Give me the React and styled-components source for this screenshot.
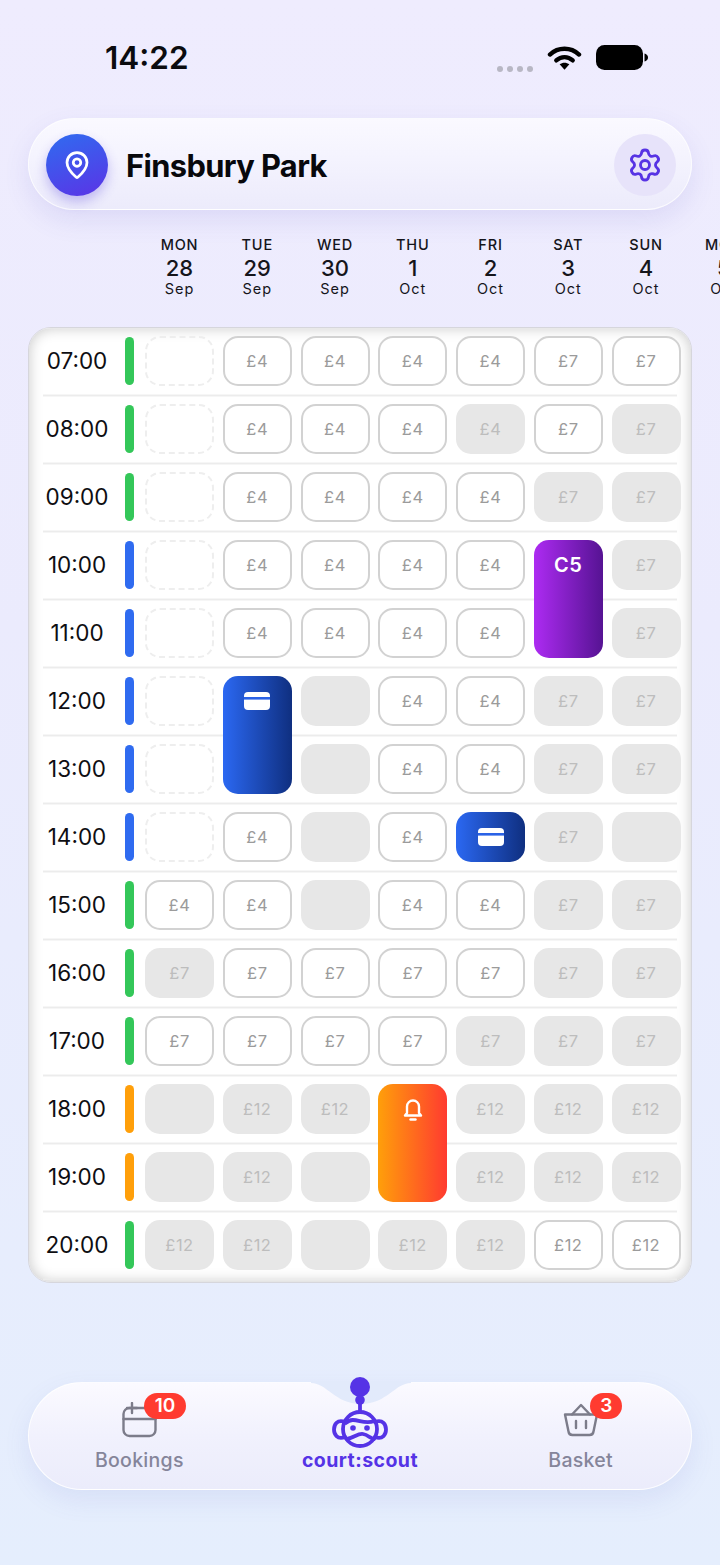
import React from "react";
import styled, { createGlobalStyle } from "styled-components";
import { MapPin, Settings } from "lucide-react";

const GlobalStyle = createGlobalStyle`
  html, body {
    margin: 0;
    padding: 0;
    width: 720px;
    height: 1565px;
    overflow: hidden;
    font-family: Inter, "Liberation Sans", sans-serif;
  }
`;

const days = [
  ["MON", "28", "Sep"],
  ["TUE", "29", "Sep"],
  ["WED", "30", "Sep"],
  ["THU", "1", "Oct"],
  ["FRI", "2", "Oct"],
  ["SAT", "3", "Oct"],
  ["SUN", "4", "Oct"],
  ["MON", "5", "Oct"],
];

// d = dashed, b = blank grey, number = free slot, g + number = taken slot
const rows = [
  ["07:00", "green", ["d", "4", "4", "4", "4", "7", "7"]],
  ["08:00", "green", ["d", "4", "4", "4", "g4", "7", "g7"]],
  ["09:00", "green", ["d", "4", "4", "4", "4", "g7", "g7"]],
  ["10:00", "blue", ["d", "4", "4", "4", "4", "court", "g7"]],
  ["11:00", "blue", ["d", "4", "4", "4", "4", "g7"]],
  ["12:00", "blue", ["d", "cardTall", "b", "4", "4", "g7", "g7"]],
  ["13:00", "blue", ["d", "b", "4", "4", "g7", "g7"]],
  ["14:00", "blue", ["d", "4", "b", "4", "card", "g7", "b"]],
  ["15:00", "green", ["4", "4", "b", "4", "4", "g7", "g7"]],
  ["16:00", "green", ["g7", "7", "7", "7", "7", "g7", "g7"]],
  ["17:00", "green", ["7", "7", "7", "7", "g7", "g7", "g7"]],
  ["18:00", "orange", ["b", "g12", "g12", "bell", "g12", "g12", "g12"]],
  ["19:00", "orange", ["b", "g12", "b", "g12", "g12", "g12"]],
  ["20:00", "green", ["g12", "g12", "b", "g12", "g12", "12", "12"]],
];

const barColours = { green: "#34c759", blue: "#2f6bf0", orange: "#ff9f0a" };

const Page = styled.div`
  width: 720px;
  height: 1565px;
  overflow: hidden;
  background: linear-gradient(180deg, #efecfe 0%, #ebebfd 40%, #e5eefd 100%);
`;

const StatusBar = styled.div`
  height: 118px;
  box-sizing: border-box;
  padding: 38px 72px 0 105px;
  display: flex;
  align-items: flex-start;
`;

const Clock = styled.div`
  font-size: 31.5px;
  line-height: 39px;
  font-weight: 600;
  color: #0b0b0f;
  flex: 1;
`;

const StatusIcons = styled.div`
  display: flex;
  align-items: center;
  height: 39px;
`;

const Dots = styled.div`
  display: flex;
  gap: 4px;
  margin: 22px 14px 0 0;
`;

const Dot = styled.span`
  width: 6px;
  height: 6px;
  border-radius: 50%;
  background: #b8b7c4;
`;

const BatteryIcon = styled.svg`
  margin-left: 14px;
`;

const Header = styled.div`
  margin: 0 28px;
  height: 92px;
  box-sizing: border-box;
  padding: 1px 15px 0 17px;
  border-radius: 46px;
  border: 1px solid rgba(255, 255, 255, 0.75);
  background: linear-gradient(180deg, #faf9ff 0%, #f4f3fe 45%, #ecebfb 100%);
  box-shadow: 0 10px 26px rgba(92, 80, 200, 0.12);
  display: flex;
  align-items: center;
`;

const PinButton = styled.div`
  width: 62px;
  height: 62px;
  border-radius: 50%;
  background: linear-gradient(160deg, #2f6cf0 0%, #5b33e6 100%);
  box-shadow: 0 6px 12px rgba(80, 60, 220, 0.3);
  color: #fff;
  display: flex;
  align-items: center;
  justify-content: center;
`;

const Title = styled.div`
  flex: 1;
  margin-left: 18px;
  padding-top: 1px;
  font-size: 30.8px;
  font-weight: 700;
  letter-spacing: -0.6px;
  color: #08080c;
`;

const GearButton = styled.div`
  width: 62px;
  height: 62px;
  border-radius: 50%;
  background: #e7e3fa;
  color: #5733e4;
  display: flex;
  align-items: center;
  justify-content: center;
`;

const DayRow = styled.div`
  height: 117px;
  box-sizing: border-box;
  padding: 26px 0 0 145px;
  display: grid;
  grid-template-columns: repeat(8, 69px);
  column-gap: 8.75px;
  align-content: start;
`;

const Day = styled.div`
  text-align: center;
  color: #15151b;
`;

const DayName = styled.div`
  font-size: 14.5px;
  line-height: 18px;
  font-weight: 500;
  letter-spacing: 0.8px;
`;

const DayNumber = styled.div`
  margin-top: 2px;
  font-size: 22px;
  line-height: 25px;
  font-weight: 500;
`;

const DayMonth = styled.div`
  margin-top: -1px;
  font-size: 14.5px;
  line-height: 17px;
  letter-spacing: 1px;
`;

const Card = styled.div`
  margin: 0 28px;
  height: 956px;
  box-sizing: border-box;
  padding: 0 10px 2px 14px;
  border: 1px solid #d6d6dc;
  border-radius: 23px;
  background: #fff;
  box-shadow: inset 0 0 14px rgba(0, 0, 0, 0.22);
`;

const Grid = styled.div`
  display: grid;
  grid-template-columns: 93.25px repeat(7, 69px);
  grid-auto-rows: 68px;
  column-gap: 8.75px;
  background-image: linear-gradient(
    180deg,
    transparent 66.5px,
    #ececec 66.5px,
    #ececec 68px
  );
  background-size: 634px 68px;
  background-repeat: repeat-y;
  background-position: 0 0.5px;
`;

const TimeSlot = styled.div`
  padding: 8px 0 10px;
  display: flex;
  align-items: center;
`;

const TimeLabel = styled.div`
  width: 68px;
  margin-bottom: 2px;
  text-align: center;
  font-size: 22.5px;
  color: #0e0e12;
`;

const Bar = styled.span`
  margin-left: 14px;
  width: 9px;
  height: 48px;
  border-radius: 5px;
  background: ${(p) => p.$colour};
`;

const Slot = styled.div`
  margin: 8px 0 10px;
  box-sizing: border-box;
  border-radius: 15px;
  display: flex;
  align-items: center;
  justify-content: center;
  font-size: 16.5px;
  letter-spacing: 0.5px;
`;

const FreeSlot = styled(Slot)`
  border: 2px solid #d2d2d2;
  background: #fff;
  color: #9b9b9b;
`;

const TakenSlot = styled(Slot)`
  background: #e7e7e7;
  color: #bdbdbd;
`;

const DashedSlot = styled(Slot)`
  border: 2px dashed #eeeeee;
`;

const ActiveSlot = styled(Slot)`
  grid-row: span ${(p) => p.$span};
  align-items: flex-start;
  background: ${(p) => p.$fill};
  color: #fff;
`;

const ActiveTop = styled.div`
  height: 50px;
  display: flex;
  align-items: center;
  justify-content: center;
  font-size: 20px;
  font-weight: 600;
`;

const NavBar = styled.div`
  position: relative;
  margin: 99px 28px 0;
  height: 108px;
  box-sizing: border-box;
  border-radius: 54px;
  border: 1px solid rgba(255, 255, 255, 0.85);
  background: linear-gradient(180deg, #fbfaff 0%, #f1f1fd 50%, #ebecfb 100%);
  box-shadow: 0 10px 26px rgba(92, 100, 200, 0.1);
  display: grid;
  grid-template-columns: repeat(3, 1fr);
`;

const Notch = styled.svg`
  position: absolute;
  left: 282px;
  top: -2px;
`;

const NavItem = styled.div`
  position: relative;
  display: flex;
  flex-direction: column;
  align-items: center;
  justify-content: flex-end;
  padding-bottom: 17px;
  font-size: 19.5px;
  letter-spacing: ${(p) => (p.$active ? "0.45px" : "0.3px")};
  line-height: 24px;
  color: ${(p) => (p.$active ? "#5533e6" : "#85859a")};
  font-weight: ${(p) => (p.$active ? 700 : 500)};
`;

const NavIcon = styled.svg`
  display: block;
  margin-bottom: 10px;
`;

const RobotLogo = styled.svg`
  position: absolute;
  left: 50%;
  margin-left: -28px;
  top: -6px;
`;

const Badge = styled.span`
  position: absolute;
  top: 10px;
  left: ${(p) => p.$left}px;
  height: 26px;
  min-width: ${(p) => p.$width}px;
  border-radius: 13px;
  background: #ff3b30;
  color: #fff;
  font-size: 19px;
  line-height: 26px;
  font-weight: 600;
  letter-spacing: 0;
  text-align: center;
`;

const CardIcon = () => (
  <svg width="26" height="18" viewBox="0 0 26 18">
    <rect width="26" height="18" rx="4" fill="#fff" />
    <rect y="5" width="26" height="2.6" fill="#2a62e6" />
  </svg>
);

const BellIcon = () => (
  <svg width="22" height="24" viewBox="0 0 22 24" fill="none" stroke="#fff" strokeWidth="2.4" strokeLinecap="round" strokeLinejoin="round">
    <path d="M5 16V9.5a6 6 0 0 1 12 0V16l2 2.500H3z" />
    <path d="M8.500 22.500h5" />
  </svg>
);

const renderSlot = (value, key) => {
  if (value === "d") return <DashedSlot key={key} />;
  if (value === "b") return <TakenSlot key={key} />;
  if (value === "court") {
    return (
      <ActiveSlot key={key} $span={2} $fill="linear-gradient(90deg, #ad2bf2 0%, #561393 100%)">
        <ActiveTop>C5</ActiveTop>
      </ActiveSlot>
    );
  }
  if (value === "cardTall" || value === "card") {
    return (
      <ActiveSlot key={key} $span={value === "card" ? 1 : 2} $fill="linear-gradient(90deg, #2b68f2 0%, #0f2f80 100%)">
        <ActiveTop>
          <CardIcon />
        </ActiveTop>
      </ActiveSlot>
    );
  }
  if (value === "bell") {
    return (
      <ActiveSlot key={key} $span={2} $fill="linear-gradient(90deg, #ff9f0a 0%, #ff3b30 100%)">
        <ActiveTop>
          <BellIcon />
        </ActiveTop>
      </ActiveSlot>
    );
  }
  if (value[0] === "g") return <TakenSlot key={key}>£{value.slice(1)}</TakenSlot>;
  return <FreeSlot key={key}>£{value}</FreeSlot>;
};

const App = () => (
  <Page>
    <GlobalStyle />
    <StatusBar>
      <Clock>14:22</Clock>
      <StatusIcons>
        <Dots>
          <Dot />
          <Dot />
          <Dot />
          <Dot />
        </Dots>
        <svg width="35" height="27" viewBox="0 0 36 27" fill="none" stroke="#000" strokeWidth="4.4" strokeLinecap="round">
          <path d="M3 10.500C11.500 2.500 24.500 2.500 33 10.500" />
          <path d="M9.500 16.500C14.500 12 21.500 12 26.500 16.500" />
          <path d="M18 26l-5-5.500c3-2.200 7-2.200 10 0z" fill="#000" stroke="none" />
        </svg>
        <BatteryIcon width="52" height="26" viewBox="0 0 52 26">
          <rect width="47" height="25" rx="8.500" fill="#000" />
          <path d="M48.500 8.500c2 .5 3.500 2 3.500 4s-1.500 3.500-3.500 4z" fill="#000" />
        </BatteryIcon>
      </StatusIcons>
    </StatusBar>

    <Header>
      <PinButton>
        <MapPin size={30} strokeWidth={2.2} />
      </PinButton>
      <Title>Finsbury Park</Title>
      <GearButton>
        <Settings size={36} strokeWidth={1.9} />
      </GearButton>
    </Header>

    <DayRow>
      {days.map(([name, number, month], i) => (
        <Day key={i}>
          <DayName>{name}</DayName>
          <DayNumber>{number}</DayNumber>
          <DayMonth>{month}</DayMonth>
        </Day>
      ))}
    </DayRow>

    <Card>
      <Grid>
        {rows.map(([time, colour, slots]) => (
          <React.Fragment key={time}>
            <TimeSlot>
              <TimeLabel>{time}</TimeLabel>
              <Bar $colour={barColours[colour]} />
            </TimeSlot>
            {slots.map((value, i) => renderSlot(value, time + i))}
          </React.Fragment>
        ))}
      </Grid>
    </Card>

    <NavBar>
      <Notch width="100" height="26" viewBox="0 0 100 26">
        <path d="M0 0h100v2C84 2 76 23 50 23S16 2 0 2z" fill="#e2eafb" />
      </Notch>
      <NavItem>
        <NavIcon width="36" height="36" viewBox="0 0 36 36" fill="none" stroke="#7c7c8a" strokeWidth="2.4" strokeLinecap="round" strokeLinejoin="round">
          <rect x="2.500" y="6" width="32" height="28" rx="6" />
          <path d="M2.500 17h32" />
          <path d="M11 1v10M6 6h10" />
        </NavIcon>
        Bookings
        <Badge $left={115} $width={42}>10</Badge>
      </NavItem>
      <NavItem $active>
        <RobotLogo width="56" height="72" viewBox="0 0 56 72" fill="none" stroke="#5533e6" strokeWidth="3.8" strokeLinecap="round" strokeLinejoin="round">
          <circle cx="28" cy="10" r="10" fill="#5533e6" stroke="none" />
          <circle cx="28" cy="23" r="4.800" fill="#5533e6" stroke="none" />
          <path d="M28 26v8" />
          <circle cx="28" cy="52" r="17" />
          <path d="M13 45C5 42 2 48 2 52.500S5 63 13 60" />
          <path d="M43 45C51 42 54 48 54 52.500S51 63 43 60" />
          <path d="M14 46C22 38 31 49 42 44" />
          <path d="M15 62C22 61 26 56 31 57S38 61 42 62" />
          <circle cx="21" cy="51" r="2.800" fill="#5533e6" stroke="none" />
          <circle cx="35" cy="51" r="2.800" fill="#5533e6" stroke="none" />
        </RobotLogo>
        court:scout
      </NavItem>
      <NavItem>
        <NavIcon width="36" height="36" viewBox="0 0 36 36" fill="none" stroke="#7c7c8a" strokeWidth="2.4" strokeLinecap="round" strokeLinejoin="round">
          <path d="M2 12.500h32l-3.500 17a4 4 0 0 1-4 3.500H9.500a4 4 0 0 1-4-3.500z" />
          <path d="M9 12.500L18 3l9 9.500" />
          <path d="M13 19v7M23 19v7" />
        </NavIcon>
        Basket
        <Badge $left={120} $width={32}>3</Badge>
      </NavItem>
    </NavBar>
  </Page>
);

export default App;
